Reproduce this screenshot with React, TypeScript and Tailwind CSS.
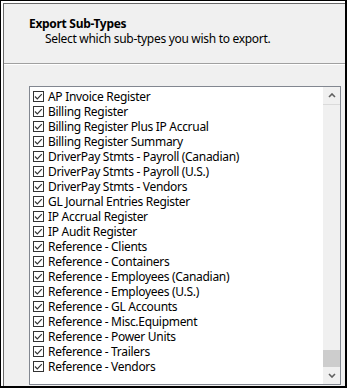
import React from "react";

const ITEMS = [
  "AP Invoice Register",
  "Billing Register",
  "Billing Register Plus IP Accrual",
  "Billing Register Summary",
  "DriverPay Stmts - Payroll (Canadian)",
  "DriverPay Stmts - Payroll (U.S.)",
  "DriverPay Stmts - Vendors",
  "GL Journal Entries Register",
  "IP Accrual Register",
  "IP Audit Register",
  "Reference - Clients",
  "Reference - Containers",
  "Reference - Employees (Canadian)",
  "Reference - Employees (U.S.)",
  "Reference - GL Accounts",
  "Reference - Misc.Equipment",
  "Reference - Power Units",
  "Reference - Trailers",
  "Reference - Vendors",
];

// Checked box, drawn like the Windows 10 list-view checkbox
const CheckBox = () => (
  <svg width="11" height="11" viewBox="0 0 11 11" className="shrink-0">
    <rect x="0.5" y="0.5" width="10" height="10" fill="#fff" stroke="#333" />
    <polyline points="2,5.5 4.3,7.8 8.8,3.2" fill="none" stroke="#333" strokeWidth="1.2" />
  </svg>
);

const Chevron = ({ down }: { down?: boolean }) => (
  <svg width="8" height="5" viewBox="0 0 8 5">
    <polyline
      points={down ? "1,1 4,4 7,1" : "1,4 4,1 7,4"}
      fill="none"
      stroke="#606060"
      strokeWidth="1.6"
    />
  </svg>
);

export default function App() {
  return (
    <div
      className="w-[347px] h-[388px] box-border border-t border-l border-r-2 border-b-2 border-black bg-white pl-[2px] pt-[2px] text-[12px] tracking-[-0.3px] text-black"
      style={{ fontFamily: '"Noto Sans", "Segoe UI", sans-serif' }}
    >
      <div className="h-full flex flex-col border-t border-l border-[#696969] bg-[#f0f0f0]">
        {/* Header */}
        <div className="h-[60px] shrink-0 border-b border-[#a0a0a0] pt-[12px] pl-[25px] leading-[15px]">
          <div className="font-bold">Export Sub-Types</div>
          <div className="pl-[16px]">Select which sub-types you wish to export.</div>
        </div>
        <div className="h-px bg-white shrink-0" />

        {/* List box */}
        <div className="mt-[21px] ml-[25px] w-[312px] h-[299px] flex border border-[#828790] bg-white">
          <div className="flex-1 pt-[2px] pl-[3px] leading-[15px]">
            {ITEMS.map((item) => (
              <div key={item} className="h-[15px] flex items-center gap-[4px] whitespace-nowrap">
                <CheckBox />
                <span className="leading-[15px]">{item}</span>
              </div>
            ))}
          </div>
          {/* Scrollbar */}
          <div className="w-[17px] flex flex-col bg-[#f0f0f0]">
            <div className="h-[18px] flex items-center justify-center border-b border-[#dadada]">
              <Chevron />
            </div>
            <div className="flex-1" />
            <div className="h-[17px] bg-[#cdcdcd]" />
            <div className="h-[17px] flex items-center justify-center">
              <Chevron down />
            </div>
          </div>
        </div>
      </div>
    </div>
  );
}
